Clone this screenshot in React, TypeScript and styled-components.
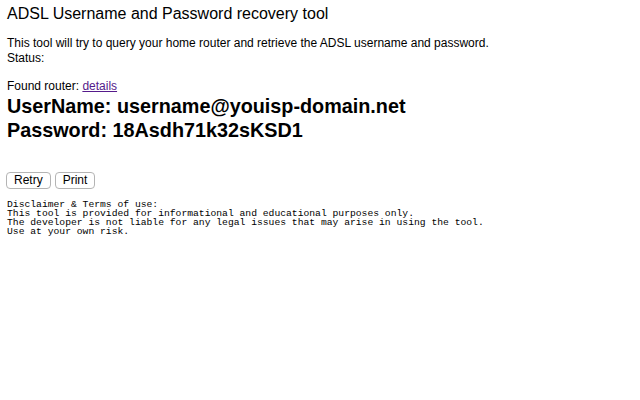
import React from "react";
import styled, { createGlobalStyle } from "styled-components";

const Global = createGlobalStyle`
  html, body { background: #fff; }
  body {
    margin: 0;
    padding: 0 7px;
    font-family: "Liberation Sans", Arial, Helvetica, sans-serif;
    color: #000;
  }
`;

const Page = styled.div`
  display: flex;
  flex-direction: column;
  padding-top: 4px;
`;

const Title = styled.div`
  font-size: 16px;
  line-height: 19px;
`;

const Text = styled.div<{ $gap?: number }>`
  font-size: 12px;
  line-height: 15px;
  margin-top: ${(p) => p.$gap ?? 0}px;
`;

const Link = styled.a`
  color: #551a8b;
  text-decoration: underline;
`;

const Credential = styled.div`
  font-size: 19.8px;
  font-weight: bold;
  line-height: 24px;
`;

const ButtonRow = styled.div`
  display: flex;
  gap: 4px;
  margin-top: 30px;
  margin-left: -1px;
`;

const Button = styled.button`
  font-family: "Liberation Sans", Arial, Helvetica, sans-serif;
  font-size: 12px;
  height: 17px;
  padding: 0 7px;
  background: #fff;
  border: 1px solid #b4b4b4;
  border-radius: 4px;
  color: #000;
  line-height: 15px;
`;

const Disclaimer = styled.pre`
  font-family: "Liberation Mono", "Courier New", monospace;
  font-size: 9.7px;
  line-height: 9px;
  margin: 11px 0 0;
`;

export default function App() {
  return (
    <>
      <Global />
      <Page>
        <Title>ADSL Username and Password recovery tool</Title>
        <Text $gap={13}>
          This tool will try to query your home router and retrieve the ADSL username and password.
        </Text>
        <Text>Status:</Text>
        <Text $gap={13}>
          Found router: <Link href="#">details</Link>
        </Text>
        <Credential>UserName: username@youisp-domain.net</Credential>
        <Credential>Password: 18Asdh71k32sKSD1</Credential>
        <ButtonRow>
          <Button>Retry</Button>
          <Button>Print</Button>
        </ButtonRow>
        <Disclaimer>{`Disclaimer & Terms of use:
This tool is provided for informational and educational purposes only.
The developer is not liable for any legal issues that may arise in using the tool.
Use at your own risk.`}</Disclaimer>
      </Page>
    </>
  );
}
